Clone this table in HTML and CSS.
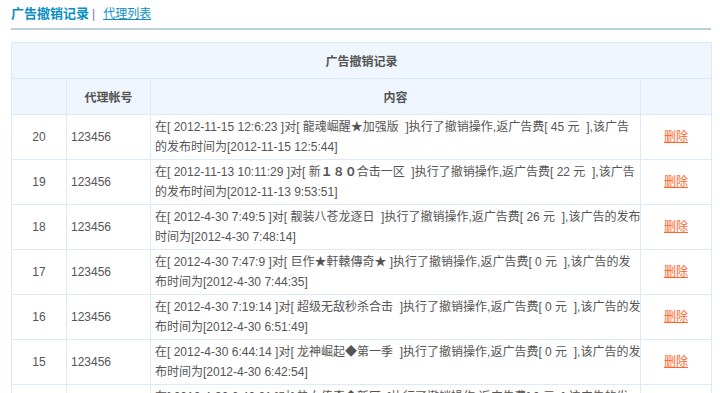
FILE: index.html
```html
<!DOCTYPE html>
<html>
<head>
<meta charset="utf-8">
<link rel="stylesheet" href="styles.css">
</head>
<body>
<div class="page">
  <div class="tabs">
    <span class="tab-cur">广告撤销记录</span><span class="sep">|</span><a class="tab-link" href="#">代理列表</a>
  </div>
  <table class="grid">
    <colgroup><col class="c1"><col class="c2"><col class="c3"><col class="c4"></colgroup>
    <tr class="title-row"><th colspan="4">广告撤销记录</th></tr>
    <tr class="head-row"><th></th><th>代理帐号</th><th>内容</th><th></th></tr>
    <tr><td class="num">20</td><td class="acc">123456</td><td class="txt">在[ 2012-11-15 12:6:23 ]对[ 龍魂崛醒★加强版 &nbsp;]执行了撤销操作,返广告费[ 45 元 &nbsp;],该广告<br>的发布时间为[2012-11-15 12:5:44]</td><td class="op"><a href="#">删除</a></td></tr>
    <tr><td class="num">19</td><td class="acc">123456</td><td class="txt">在[ 2012-11-13 10:11:29 ]对[ 新<b class="fw">１８０</b>合击一区 &nbsp;]执行了撤销操作,返广告费[ 22 元 &nbsp;],该广告<br>的发布时间为[2012-11-13 9:53:51]</td><td class="op"><a href="#">删除</a></td></tr>
    <tr><td class="num">18</td><td class="acc">123456</td><td class="txt">在[ 2012-4-30 7:49:5 ]对[ 靓装八苍龙逐日 &nbsp;]执行了撤销操作,返广告费[ 26 元 &nbsp;],该广告的发布<br>时间为[2012-4-30 7:48:14]</td><td class="op"><a href="#">删除</a></td></tr>
    <tr><td class="num">17</td><td class="acc">123456</td><td class="txt">在[ 2012-4-30 7:47:9 ]对[ 巨作★軒轅傳奇★ ]执行了撤销操作,返广告费[ 0 元 &nbsp;],该广告的发<br>布时间为[2012-4-30 7:44:35]</td><td class="op"><a href="#">删除</a></td></tr>
    <tr><td class="num">16</td><td class="acc">123456</td><td class="txt">在[ 2012-4-30 7:19:14 ]对[ 超级无敌秒杀合击 &nbsp;]执行了撤销操作,返广告费[ 0 元 &nbsp;],该广告的发<br>布时间为[2012-4-30 6:51:49]</td><td class="op"><a href="#">删除</a></td></tr>
    <tr><td class="num">15</td><td class="acc">123456</td><td class="txt">在[ 2012-4-30 6:44:14 ]对[ 龙神崛起◆第一季 &nbsp;]执行了撤销操作,返广告费[ 0 元 &nbsp;],该广告的发<br>布时间为[2012-4-30 6:42:54]</td><td class="op"><a href="#">删除</a></td></tr>
    <tr><td class="num">14</td><td class="acc">123456</td><td class="txt">在[ 2012-4-30 6:40:21 ]对[ 热血传奇◆新区 &nbsp;]执行了撤销操作,返广告费[ 0 元 &nbsp;],该广告的发<br>布时间为[2012-4-30 6:31:08]</td><td class="op"><a href="#">删除</a></td></tr>
  </table>
</div>
</body>
</html>
```
FILE: styles.css
```css
html, body {
  margin: 0;
  padding: 0;
  background: #fff;
}
body {
  font-family: "Liberation Sans", "Noto Sans CJK SC", sans-serif;
  font-size: 12px;
  color: #555;
}
.page {
  padding: 6px 9px 0 11px;
}
.tabs {
  height: 22px;
  line-height: 16px;
  border-bottom: 2px solid #bcd0d8;
  margin-bottom: 12px;
}
.tab-cur {
  font-size: 13px;
  font-weight: bold;
  color: #0b8ec6;
}
.sep {
  color: #7d72c4;
  margin: 0 8px 0 3px;
}
.tab-link {
  color: #0b8ec6;
  text-decoration: underline;
}
.grid {
  width: 700px;
  border-collapse: collapse;
  table-layout: fixed;
}
.c1 { width: 55px; }
.c2 { width: 84px; }
.c3 { width: 490px; }
.c4 { width: 71px; }
.grid th, .grid td {
  border: 1px solid #dbeaf8;
}
.grid th {
  background: #f0f6fd;
  color: #555;
  font-weight: bold;
  height: 35px;
  padding: 0;
  text-align: center;
}
.grid td {
  height: 44px;
  padding: 2px 4px;
  line-height: 20px;
  color: #555;
  vertical-align: middle;
  box-sizing: border-box;
}
.grid td.num {
  text-align: center;
  padding-left: 0;
  padding-right: 0;
}
.grid td.txt {
  white-space: nowrap;
}
.fw {
  font-weight: bold;
  color: #555;
}
.grid td.op {
  text-align: center;
  padding-left: 4px;
}
.op a {
  color: #ff6428;
  text-decoration: underline;
}
```
